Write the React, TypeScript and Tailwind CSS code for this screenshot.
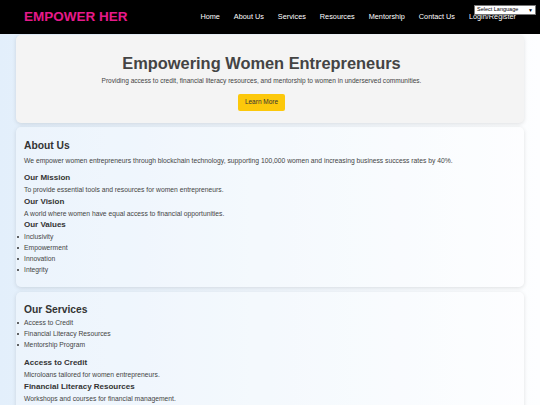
const navLinks = ["Home", "About Us", "Services", "Resources", "Mentorship", "Contact Us", "Login/Register"];

function Header() {
  return (
    <header className="relative flex h-[34px] items-center justify-between bg-black pl-6 pr-[24px]">
      <h1 className="text-[13.5px] font-bold text-[#e6198a]">EMPOWER HER</h1>
      <nav className="flex gap-[14px] pt-[1px] text-[7.3px] text-white">
        {navLinks.map((l) => (
          <a key={l} href="#">{l}</a>
        ))}
      </nav>
      <div className="absolute right-[4px] top-[5px] flex h-[10px] w-[62px] items-center justify-between border border-[#777] bg-white px-[2px] text-[5.5px] leading-none text-black">
        <span>Select Language</span>
        <span className="text-[5px]">▼</span>
      </div>
    </header>
  );
}

function Card({ children, className = "" }: { children: React.ReactNode; className?: string }) {
  return (
    <section className={`rounded-[5px] shadow-[0_1px_4px_rgba(0,0,0,0.12)] ${className}`}>{children}</section>
  );
}

function Bullets({ items }: { items: string[] }) {
  return (
    <ul className="text-[6.75px] leading-[11px] text-[#444]">
      {items.map((i) => (
        <li key={i} className="-ml-[7px] flex items-center">
          <span className="mr-[5px] h-[2px] w-[2px] rounded-full bg-[#333]" />
          {i}
        </li>
      ))}
    </ul>
  );
}

export default function App() {
  return (
    <div className="min-h-[405px] bg-gradient-to-r from-[#e3effb] to-[#fdfeff] font-['Liberation_Sans',Arial,sans-serif] text-[#333]">
      <Header />
      <main className="flex flex-col gap-[4px] px-4 pt-[1px]">
        <Card className="flex h-[88px] flex-col items-center bg-[#f4f4f4] pr-[17px] pt-[18px]">
          <h2 className="text-[16.4px] font-bold leading-[20px] text-[#444]">Empowering Women Entrepreneurs</h2>
          <p className="mt-[3px] text-[6.55px] text-[#444]">
            Providing access to credit, financial literacy resources, and mentorship to women in underserved communities.
          </p>
          <button className="mt-[8px] h-[17px] rounded-[2px] bg-[#fcc80b] px-[7px] text-[6.5px] text-[#333]">Learn More</button>
        </Card>

        <Card className="h-[160px] bg-white/30 px-2 pt-[12px]">
          <h2 className="text-[10.3px] font-bold leading-[14px]">About Us</h2>
          <p className="mt-[3px] text-[6.75px] leading-[10px] text-[#444]">
            We empower women entrepreneurs through blockchain technology, supporting 100,000 women and increasing business success rates by 40%.
          </p>
          <h3 className="mt-[6px] text-[8px] font-bold leading-[12px]">Our Mission</h3>
          <p className="text-[6.75px] leading-[12px] text-[#444]">To provide essential tools and resources for women entrepreneurs.</p>
          <h3 className="text-[8px] font-bold leading-[12px]">Our Vision</h3>
          <p className="text-[6.75px] leading-[12px] text-[#444]">A world where women have equal access to financial opportunities.</p>
          <h3 className="-mt-[1px] text-[8px] font-bold leading-[12px]">Our Values</h3>
          <Bullets items={["Inclusivity", "Empowerment", "Innovation", "Integrity"]} />
        </Card>

        <Card className="mt-[1px] bg-white/30 px-2 pb-4 pt-[11px]">
          <h2 className="text-[10.3px] font-bold leading-[14px]">Our Services</h2>
          <Bullets items={["Access to Credit", "Financial Literacy Resources", "Mentorship Program"]} />
          <h3 className="mt-[7px] text-[8px] font-bold leading-[12px]">Access to Credit</h3>
          <p className="text-[6.75px] leading-[12px] text-[#444]">Microloans tailored for women entrepreneurs.</p>
          <h3 className="text-[8px] font-bold leading-[12px]">Financial Literacy Resources</h3>
          <p className="text-[6.75px] leading-[12px] text-[#444]">Workshops and courses for financial management.</p>
        </Card>
      </main>
    </div>
  );
}
